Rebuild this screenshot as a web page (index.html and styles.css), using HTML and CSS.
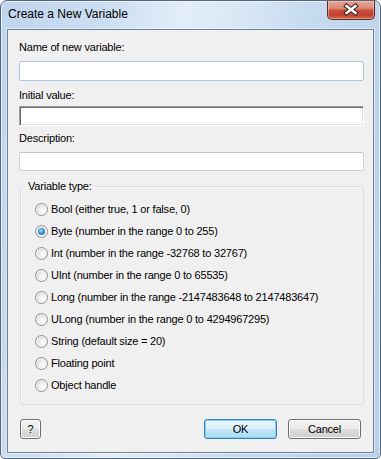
FILE: index.html
```html
<!DOCTYPE html>
<html lang="en">
<head>
<meta charset="utf-8">
<title>Create a New Variable</title>
<link rel="stylesheet" href="styles.css">
</head>
<body>
<div class="window">
  <div class="titlebar">
    <span class="title">Create a New Variable</span>
    <button class="close" aria-label="Close">
      <svg width="48" height="19" viewBox="0 0 48 19">
        <path d="M19.5 6 L28.5 13 M28.5 6 L19.5 13" stroke="#3a2424" stroke-width="4.6" stroke-linecap="square" fill="none"/>
        <path d="M19.5 6 L28.5 13 M28.5 6 L19.5 13" stroke="#ffffff" stroke-width="2.4" stroke-linecap="square" fill="none"/>
      </svg>
    </button>
  </div>
  <div class="client">
    <div class="label l1">Name of new variable:</div>
    <input class="field field-focus f1" type="text">
    <div class="label l2">Initial value:</div>
    <input class="field field-sunken f2" type="text">
    <div class="label l3">Description:</div>
    <input class="field field-plain f3" type="text">

    <fieldset class="group">
      <legend class="legend">Variable type:</legend>
      <div class="option"><span class="radio"></span><span>Bool (either true, 1 or false, 0)</span></div>
      <div class="option"><span class="radio checked"></span><span>Byte (number in the range 0 to 255)</span></div>
      <div class="option"><span class="radio"></span><span>Int (number in the range -32768 to 32767)</span></div>
      <div class="option"><span class="radio"></span><span>UInt (number in the range 0 to 65535)</span></div>
      <div class="option"><span class="radio"></span><span>Long (number in the range -2147483648 to 2147483647)</span></div>
      <div class="option"><span class="radio"></span><span>ULong (number in the range 0 to 4294967295)</span></div>
      <div class="option"><span class="radio"></span><span>String (default size = 20)</span></div>
      <div class="option"><span class="radio"></span><span>Floating point</span></div>
      <div class="option"><span class="radio"></span><span>Object handle</span></div>
    </fieldset>

    <div class="buttons">
      <button class="btn btn-help">?</button>
      <button class="btn btn-ok">OK</button>
      <button class="btn btn-cancel">Cancel</button>
    </div>
  </div>
</div>
</body>
</html>
```
FILE: styles.css
```css
* { box-sizing: border-box; }
html, body { margin: 0; padding: 0; }
body {
  width: 381px;
  height: 459px;
  overflow: hidden;
  background: #ffffff;
  font-family: "Liberation Sans", Arial, sans-serif;
}
.window {
  width: 381px;
  height: 459px;
  border: 1px solid #53667a;
  border-radius: 7px 7px 5px 5px;
  background: linear-gradient(100deg, #bfd5ed 0%, #cbddf1 22%, #e2edf9 40%, #dae8f6 52%, #c6dbef 68%, #b8d0ea 100%);
  box-shadow: inset 0 0 0 1px rgba(255,255,255,0.55);
  display: flex;
  flex-direction: column;
  overflow: hidden;
}
.titlebar {
  height: 28px;
  flex: none;
  display: flex;
  justify-content: space-between;
  align-items: flex-start;
  padding: 0 5px 0 7px;
}
.title {
  margin-top: 6px;
  font-size: 12px;
  line-height: 15px;
  color: #000;
}
.close {
  width: 48px;
  height: 19px;
  padding: 0;
  margin: 0;
  border: 1px solid #5b2a24;
  border-top: none;
  border-radius: 0 0 5px 5px;
  background: linear-gradient(#e8a493 0%, #dc8a78 40%, #c9503c 52%, #c2402c 78%, #d26a52 100%);
  box-shadow: inset 0 0 0 1px rgba(255,220,210,0.45);
  display: block;
}
.close svg { display: block; margin: -1px 0 0 -1px; }
.client {
  flex: 1;
  margin: 0 6px 5px 6px;
  border: 1px solid #6e8195;
  box-shadow: 0 0 0 1px rgba(255,255,255,0.45);
  background: #f0f0f0;
  padding: 10px 9px 0 11px;
  display: flex;
  flex-direction: column;
  font-size: 11px;
  letter-spacing: -0.2px;
  color: #000;
}
.label {
  height: 14px;
  line-height: 14px;
  white-space: nowrap;
}
.l2 { margin-top: 7px; }
.l3 { margin-top: 5px; }
.field {
  display: block;
  width: 345px;
  margin: 0;
  padding: 0 3px;
  background: #ffffff;
  font: inherit;
  outline: none;
  -webkit-appearance: none;
  appearance: none;
}
.f1 { margin-top: 7px; height: 20px; }
.f2 { margin-top: 4px; height: 20px; }
.f3 { margin-top: 7px; height: 19px; }
.field-focus {
  border: 1px solid #a9c5e2;
  border-radius: 2px;
}
.field-plain {
  border: 1px solid #c8d2dc;
  border-top-color: #bcc6d1;
  border-radius: 2px;
}
.field-sunken {
  border: 1px solid;
  border-color: #a0a0a0 #ffffff #ffffff #a0a0a0;
  border-radius: 0;
  box-shadow: inset 1px 1px 0 #696969, inset -1px -1px 0 #e3e3e3;
}
.group {
  margin: 8px 0 0 1px;
  width: 344px;
  min-width: 0;
  border: 1px solid #d5dfe5;
  border-radius: 3px;
  padding: 5px 0 8px 5px;
  box-shadow: inset 1px 1px 0 #fafafa;
}
.legend {
  padding: 0 2px;
  line-height: 14px;
  height: 14px;
}
.option {
  height: 22px;
  display: flex;
  align-items: center;
  gap: 3px;
  margin-left: 9px;
  white-space: nowrap;
}
.radio {
  width: 13px;
  height: 13px;
  flex: none;
  border-radius: 50%;
  border: 1px solid #8c8f92;
  background: radial-gradient(circle at 62% 62%, #ffffff 0%, #f0f0f0 35%, #d6d6d6 75%, #c4c4c4 100%);
  box-shadow: inset 0 0 0 1px rgba(255,255,255,0.7);
  display: flex;
  align-items: center;
  justify-content: center;
}
.radio.checked::after {
  content: "";
  width: 7px;
  height: 7px;
  border-radius: 50%;
  background: radial-gradient(circle at 42% 38%, #a6e1ff 0%, #3a97d2 45%, #174e86 100%);
}
.buttons {
  margin-top: 14px;
  display: flex;
  align-items: flex-start;
}
.btn {
  height: 20px;
  margin: 0;
  padding: 0;
  font: inherit;
  letter-spacing: -0.2px;
  color: #000;
  border: 1px solid #707070;
  border-radius: 3px;
  background: linear-gradient(#f3f3f3 0%, #ececec 48%, #dddddd 52%, #cfcfcf 100%);
  box-shadow: inset 0 0 0 1px #fbfbfb;
  line-height: 18px;
  text-align: center;
}
.btn-help { width: 21px; margin-left: 1px; }
.btn-ok {
  width: 73px;
  margin-left: auto;
  border-color: #3c7fb1;
  background: linear-gradient(#ebf6fd 0%, #dcf1fc 48%, #c3e7fb 52%, #aedcf5 100%);
  box-shadow: inset 0 0 0 1px #7fd0f2;
}
.btn-cancel { width: 73px; margin-left: 11px; margin-right: 3px; }
```
